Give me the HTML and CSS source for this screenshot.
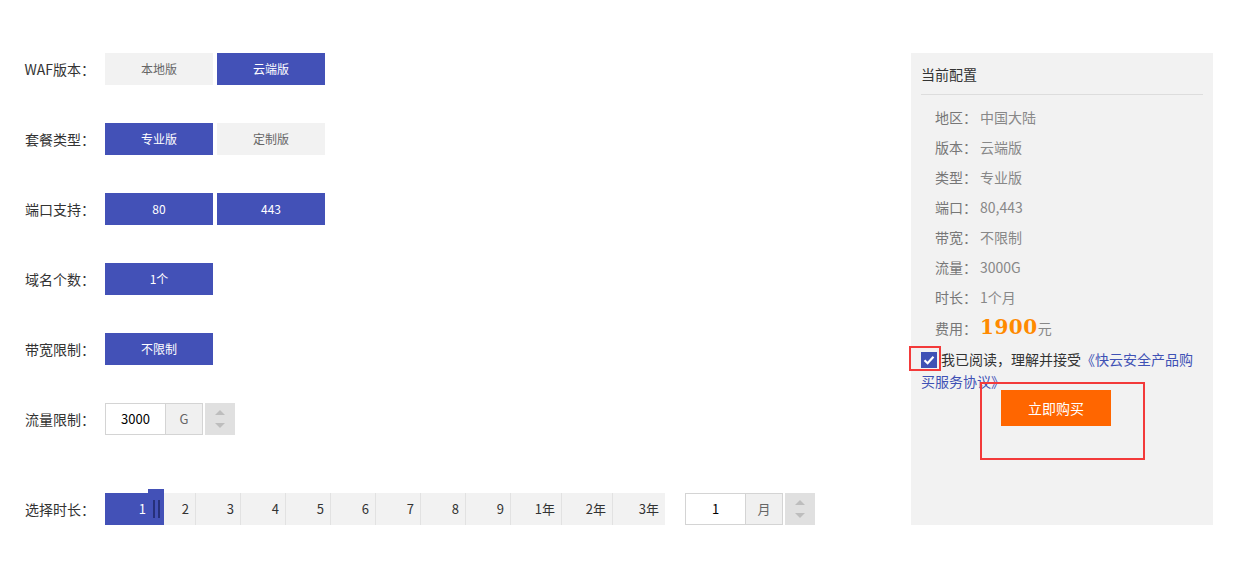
FILE: index.html
```html
<!DOCTYPE html>
<html lang="zh-CN">
<head>
  <meta charset="UTF-8" />
  <meta name="viewport" content="width=device-width, initial-scale=1.0"/>
  <title>WAF 购买</title>
  <link rel="stylesheet" href="styles.css">
</head>
<body>

<div class="page">

  <!-- 选项 -->
  <div class="options">
    <div class="row">
      <div class="label">WAF版本：</div>
      <div class="btn">本地版</div>
      <div class="btn active">云端版</div>
    </div>
    <div class="row">
      <div class="label">套餐类型：</div>
      <div class="btn active">专业版</div>
      <div class="btn">定制版</div>
    </div>
    <div class="row">
      <div class="label">端口支持：</div>
      <div class="btn active">80</div>
      <div class="btn active">443</div>
    </div>
    <div class="row">
      <div class="label">域名个数：</div>
      <div class="btn active">1个</div>
    </div>
    <div class="row">
      <div class="label">带宽限制：</div>
      <div class="btn active">不限制</div>
    </div>
    <div class="row">
      <div class="label">流量限制：</div>
      <div class="num-box">
        <div class="num-input">3000</div>
        <div class="num-unit">G</div>
      </div>
      <div class="spinner"><span class="up"></span><span class="down"></span></div>
    </div>
    <div class="row duration">
      <div class="label">选择时长：</div>
      <div class="slider">
        <div class="cell on" style="width:45px">1</div>
        <div class="cell" style="width:45px">2</div>
        <div class="cell" style="width:45px">3</div>
        <div class="cell" style="width:45px">4</div>
        <div class="cell" style="width:45px">5</div>
        <div class="cell" style="width:45px">6</div>
        <div class="cell" style="width:45px">7</div>
        <div class="cell" style="width:45px">8</div>
        <div class="cell" style="width:45px">9</div>
        <div class="cell" style="width:51px">1年</div>
        <div class="cell" style="width:51px">2年</div>
        <div class="cell" style="width:53px">3年</div>
        <div class="handle"><i></i><i></i></div>
      </div>
      <div class="num-box month">
        <div class="num-input">1</div>
        <div class="num-unit">月</div>
      </div>
      <div class="spinner"><span class="up"></span><span class="down"></span></div>
    </div>
  </div>

  <!-- 当前配置 -->
  <div class="summary">
    <div class="summary-title">当前配置</div>
    <ul class="summary-list">
      <li><span class="k">地区：</span><span class="v">中国大陆</span></li>
      <li><span class="k">版本：</span><span class="v">云端版</span></li>
      <li><span class="k">类型：</span><span class="v">专业版</span></li>
      <li><span class="k">端口：</span><span class="v">80,443</span></li>
      <li><span class="k">带宽：</span><span class="v">不限制</span></li>
      <li><span class="k">流量：</span><span class="v">3000G</span></li>
      <li><span class="k">时长：</span><span class="v">1个月</span></li>
      <li><span class="k">费用：</span><span class="price">1900</span><span class="v">元</span></li>
    </ul>
    <div class="agree">
      <span class="check">
        <svg width="16" height="16" viewBox="0 0 16 16"><path d="M3.5 8.2 L6.6 11.2 L12.5 4.8" fill="none" stroke="#fff" stroke-width="2.2"/></svg>
      </span>我已阅读，理解并接受<a href="#">《快云安全产品购买服务协议》</a>
    </div>
    <div class="buy">立即购买</div>

    <div class="mark mark-check"></div>
    <div class="mark mark-buy"></div>
  </div>

</div>

</body>
</html>
```

FILE: styles.css
```css
body {
  margin: 0;
  font-family: "Microsoft YaHei", "Noto Sans CJK SC", sans-serif;
  font-size: 14px;
  color: #333;
  background: #fff;
}
.page {
  display: flex;
  padding-top: 53px;
}
.options {
  flex: 1;
}
.row {
  display: flex;
  align-items: center;
  height: 32px;
  margin-bottom: 38px;
}
.row.duration {
  margin-top: 58px;
  margin-bottom: 0;
}
.label {
  width: 95px;
  margin-right: 10px;
  text-align: right;
  color: #333;
}
.btn {
  width: 108px;
  height: 32px;
  line-height: 32px;
  margin-right: 4px;
  text-align: center;
  font-size: 12px;
  color: #666;
  background: #f2f2f2;
}
.btn.active {
  background: #4351b7;
  color: #fff;
}
.num-box {
  display: flex;
  height: 32px;
  box-sizing: border-box;
  border: 1px solid #d4d4d4;
}
.num-input {
  width: 59px;
  line-height: 30px;
  text-align: center;
  font-size: 13px;
  color: #000;
  border-right: 1px solid #d4d4d4;
  background: #fff;
}
.num-unit {
  width: 36px;
  line-height: 30px;
  text-align: center;
  font-size: 13px;
  color: #666;
  background: #f0f0f0;
}
.num-box.month {
  margin-left: 20px;
}
.spinner {
  width: 30px;
  height: 32px;
  margin-left: 2px;
  background: #e0e0e0;
  display: flex;
  flex-direction: column;
  align-items: center;
  justify-content: center;
  gap: 8px;
}
.spinner span {
  width: 0;
  height: 0;
  border-left: 5px solid transparent;
  border-right: 5px solid transparent;
}
.spinner .up {
  border-bottom: 5px solid #bdbdbd;
}
.spinner .down {
  border-top: 5px solid #bdbdbd;
}
.slider {
  position: relative;
  display: flex;
  height: 32px;
  background: #f2f2f2;
}
.cell {
  box-sizing: border-box;
  height: 32px;
  line-height: 32px;
  padding-right: 6px;
  text-align: right;
  font-size: 13px;
  color: #333;
  border-left: 1px solid #e2e2e2;
}
.cell:first-child {
  border-left: none;
}
.cell.on {
  background: #4351b7;
  color: #fff;
  padding-right: 4px;
}
.handle {
  position: absolute;
  left: 43px;
  top: -4px;
  width: 16px;
  height: 40px;
  background: #4351b7;
  display: flex;
  justify-content: center;
  align-items: center;
  gap: 3px;
}
.handle i {
  display: block;
  width: 2px;
  height: 18px;
  background: #26307a;
}
.summary {
  position: relative;
  width: 302px;
  height: 472px;
  margin-right: 30px;
  box-sizing: border-box;
  padding: 10px;
  background: #f2f2f2;
}
.summary-title {
  line-height: 22px;
  padding-bottom: 9px;
  border-bottom: 1px solid #dddddd;
  font-size: 14px;
  color: #333;
}
.summary-list {
  list-style: none;
  margin: 7px 0 0;
  padding: 0 0 0 14px;
}
.summary-list li {
  line-height: 30px;
  height: 30px;
}
.summary-list .k {
  color: #777;
  margin-right: 3px;
}
.summary-list .v {
  color: #888;
}
.price {
  font-family: "DejaVu Serif", "Liberation Serif", serif;
  font-weight: bold;
  font-size: 20px;
  color: #ff8a00;
  letter-spacing: 0.5px;
}
.agree {
  margin-top: 6px;
  line-height: 22px;
  color: #333;
}
.agree a {
  color: #3f51b5;
  text-decoration: none;
}
.check {
  display: inline-block;
  width: 16px;
  height: 16px;
  margin-right: 4px;
  vertical-align: -3px;
  background: #3f51b5;
}
.check svg {
  display: block;
}
.buy {
  width: 110px;
  height: 36px;
  line-height: 36px;
  margin: -2px 0 0 80px;
  text-align: center;
  color: #fff;
  background: #ff6600;
}
.mark {
  position: absolute;
  box-sizing: border-box;
  border: 2px solid #f33a3a;
}
.mark-check {
  left: -2px;
  top: 293px;
  width: 32px;
  height: 25px;
}
.mark-buy {
  left: 69px;
  top: 329px;
  width: 165px;
  height: 78px;
}
```
